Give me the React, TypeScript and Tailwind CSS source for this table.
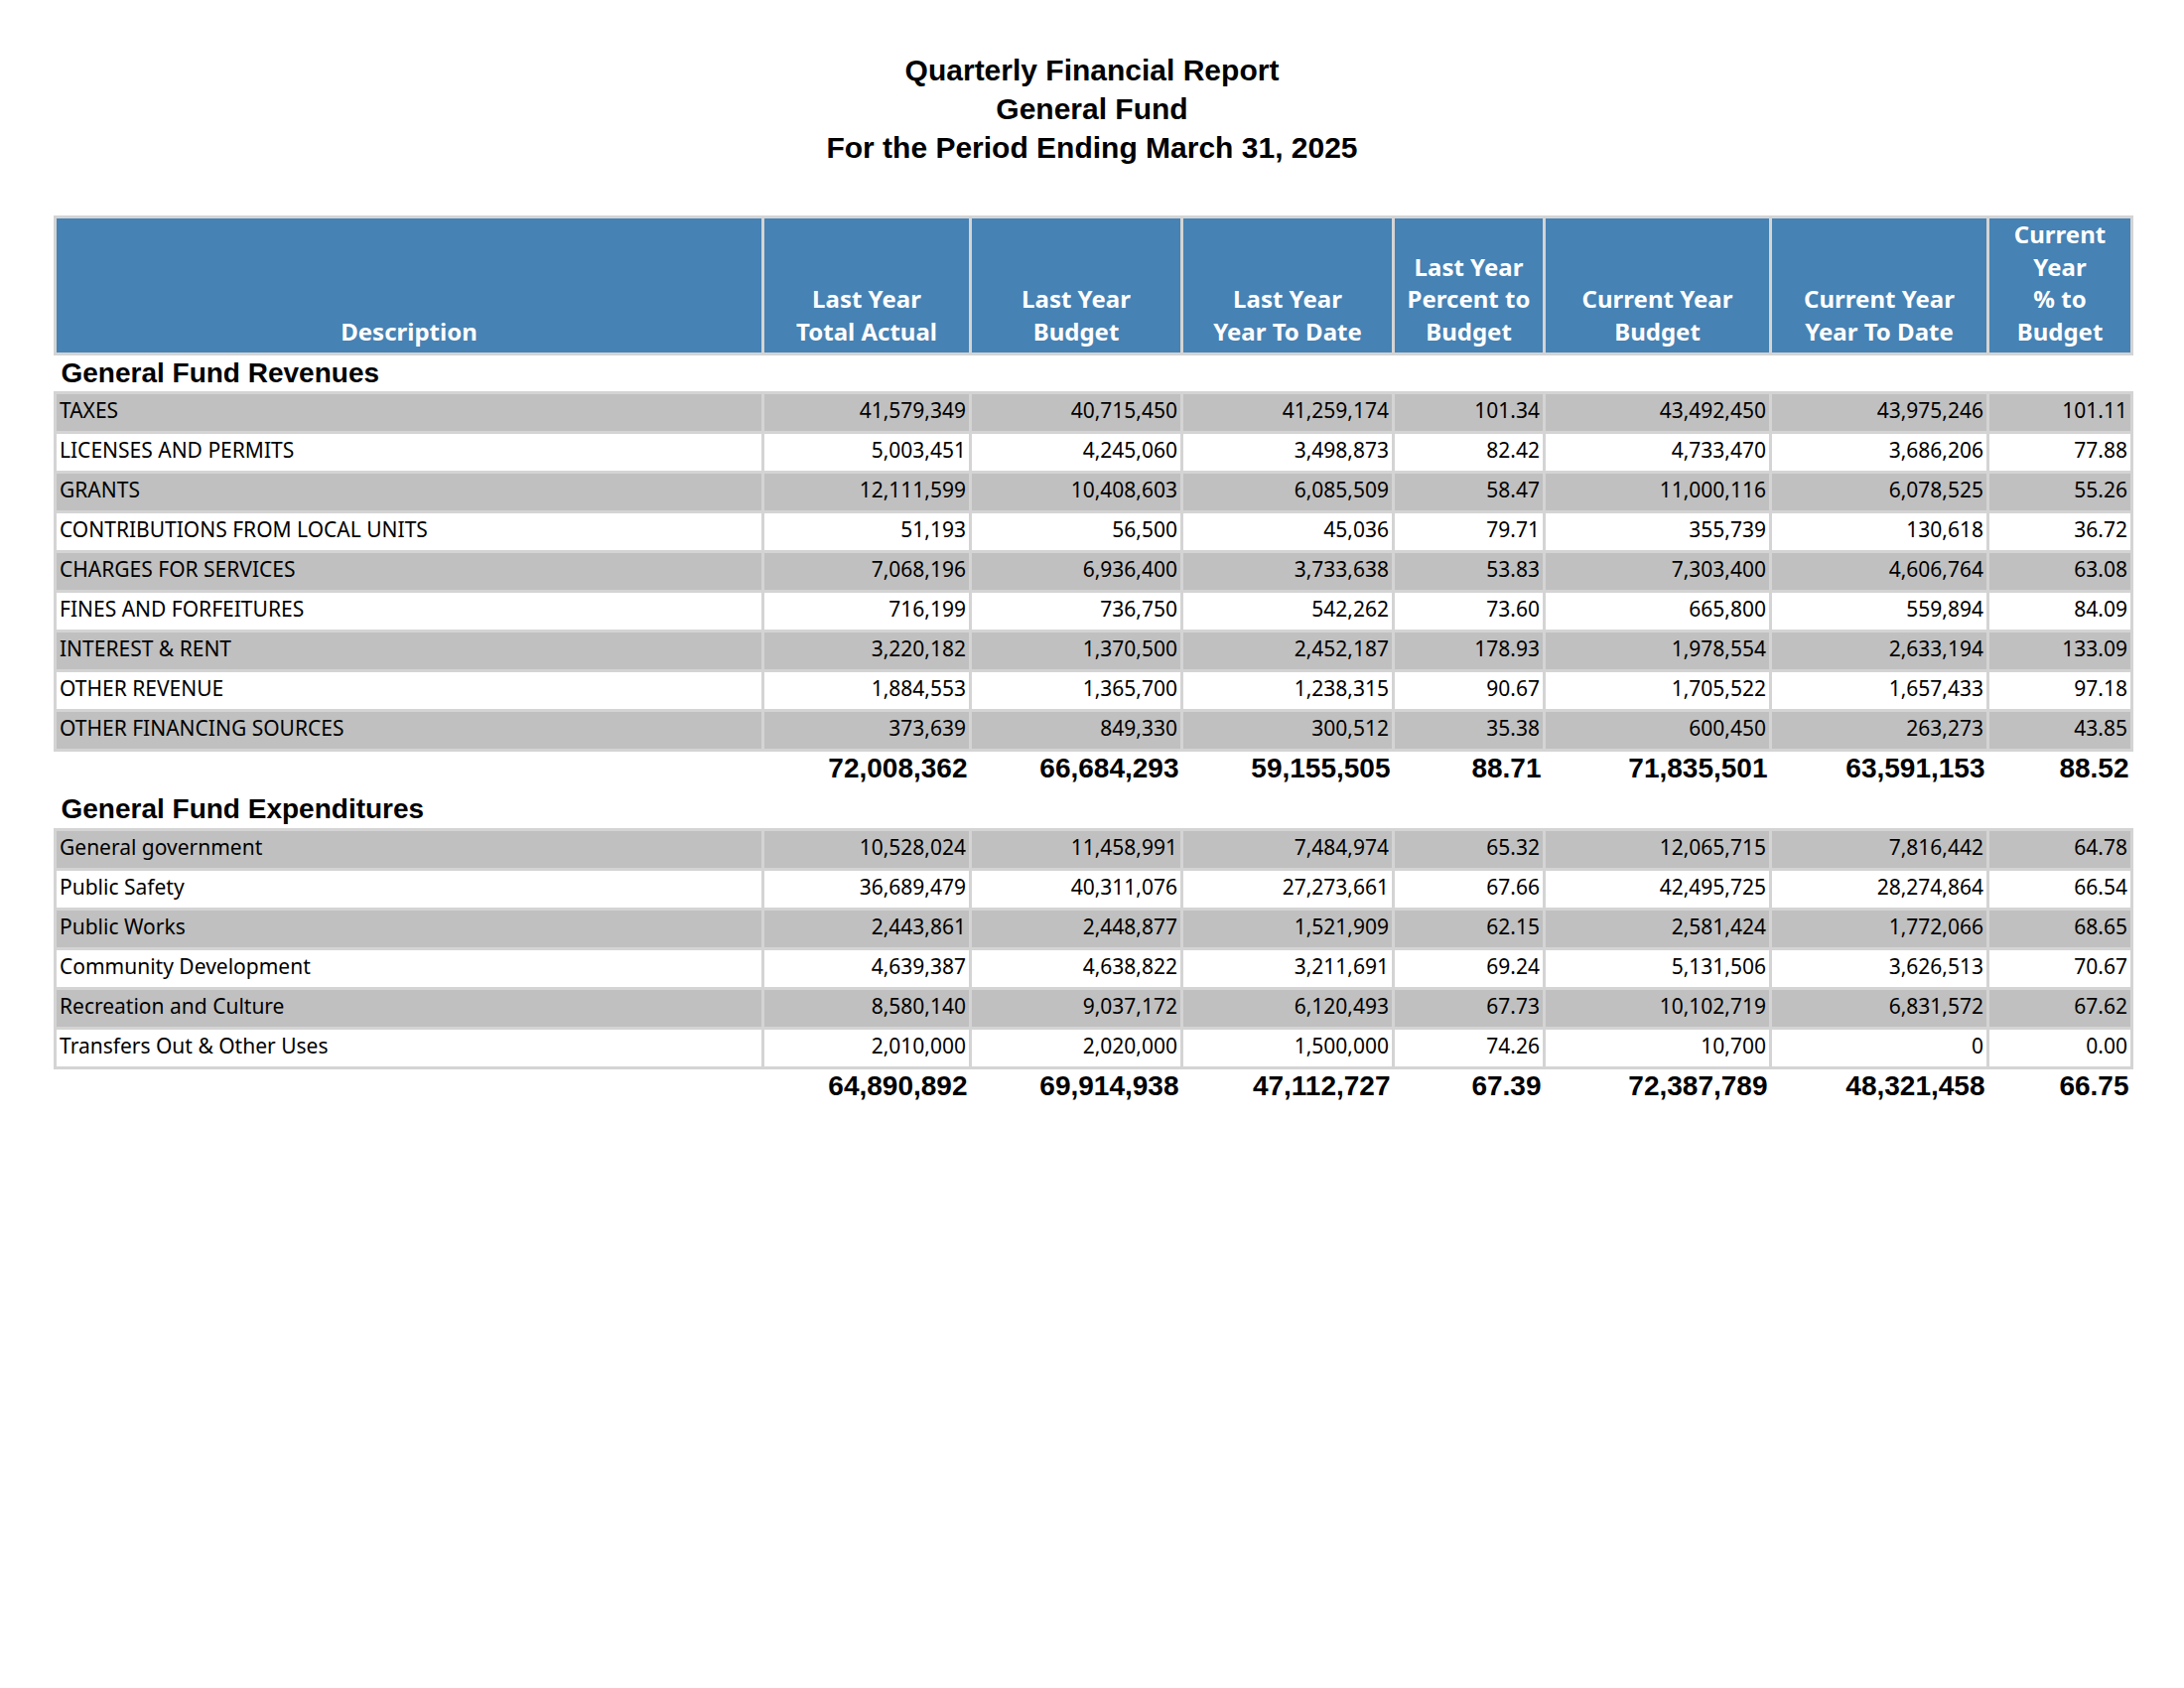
const body = "font-['Noto_Sans','DejaVu_Sans',sans-serif]";
const arial = "font-['Liberation_Sans',Arial,sans-serif]";

type Row = [string, string, string, string, string, string, string, string];

const revenues: Row[] = [
  ['TAXES', '41,579,349', '40,715,450', '41,259,174', '101.34', '43,492,450', '43,975,246', '101.11'],
  ['LICENSES AND PERMITS', '5,003,451', '4,245,060', '3,498,873', '82.42', '4,733,470', '3,686,206', '77.88'],
  ['GRANTS', '12,111,599', '10,408,603', '6,085,509', '58.47', '11,000,116', '6,078,525', '55.26'],
  ['CONTRIBUTIONS FROM LOCAL UNITS', '51,193', '56,500', '45,036', '79.71', '355,739', '130,618', '36.72'],
  ['CHARGES FOR SERVICES', '7,068,196', '6,936,400', '3,733,638', '53.83', '7,303,400', '4,606,764', '63.08'],
  ['FINES AND FORFEITURES', '716,199', '736,750', '542,262', '73.60', '665,800', '559,894', '84.09'],
  ['INTEREST & RENT', '3,220,182', '1,370,500', '2,452,187', '178.93', '1,978,554', '2,633,194', '133.09'],
  ['OTHER REVENUE', '1,884,553', '1,365,700', '1,238,315', '90.67', '1,705,522', '1,657,433', '97.18'],
  ['OTHER FINANCING SOURCES', '373,639', '849,330', '300,512', '35.38', '600,450', '263,273', '43.85'],
];
const revenueTotals = ['72,008,362', '66,684,293', '59,155,505', '88.71', '71,835,501', '63,591,153', '88.52'];

const expenditures: Row[] = [
  ['General government', '10,528,024', '11,458,991', '7,484,974', '65.32', '12,065,715', '7,816,442', '64.78'],
  ['Public Safety', '36,689,479', '40,311,076', '27,273,661', '67.66', '42,495,725', '28,274,864', '66.54'],
  ['Public Works', '2,443,861', '2,448,877', '1,521,909', '62.15', '2,581,424', '1,772,066', '68.65'],
  ['Community Development', '4,639,387', '4,638,822', '3,211,691', '69.24', '5,131,506', '3,626,513', '70.67'],
  ['Recreation and Culture', '8,580,140', '9,037,172', '6,120,493', '67.73', '10,102,719', '6,831,572', '67.62'],
  ['Transfers Out & Other Uses', '2,010,000', '2,020,000', '1,500,000', '74.26', '10,700', '0', '0.00'],
];
const expenditureTotals = ['64,890,892', '69,914,938', '47,112,727', '67.39', '72,387,789', '48,321,458', '66.75'];

const headers: string[][] = [
  ['Description'],
  ['Last Year', 'Total Actual'],
  ['Last Year', 'Budget'],
  ['Last Year', 'Year To Date'],
  ['Last Year', 'Percent to', 'Budget'],
  ['Current Year', 'Budget'],
  ['Current Year', 'Year To Date'],
  ['Current', 'Year', '% to', 'Budget'],
];

function SectionTitle({ title }: { title: string }) {
  return (
    <tr className="h-[39px]">
      <td colSpan={8} className={`${arial} px-[6px] text-[28px] font-bold leading-none text-black`}>
        {title}
      </td>
    </tr>
  );
}

function DataRow({ row, shaded }: { row: Row; shaded: boolean }) {
  return (
    <tr className={`h-[40px] ${shaded ? 'bg-[#c0c0c0]' : 'bg-white'}`}>
      {row.map((cell, i) => (
        <td
          key={i}
          className={`border-[3px] border-[#d4d4d4] px-[3px] pb-[5px] text-[21px] leading-none text-black ${
            i === 0 ? 'text-left' : 'text-right'
          }`}
        >
          {cell}
        </td>
      ))}
    </tr>
  );
}

function TotalRow({ values }: { values: string[] }) {
  return (
    <tr className="h-[41px]">
      <td />
      {values.map((v, i) => (
        <td key={i} className={`${arial} px-[3px] pb-[5px] text-right text-[28px] font-bold leading-none text-black`}>
          {v}
        </td>
      ))}
    </tr>
  );
}

export default function App() {
  return (
    <div className={`min-h-[1700px] w-[2200px] bg-white ${body}`}>
      {/* Report title */}
      <div className={`${arial} pt-[51px] text-center text-[30px] font-bold leading-[39px] text-black`}>
        <div>Quarterly Financial Report</div>
        <div>General Fund</div>
        <div>For the Period Ending March 31, 2025</div>
      </div>

      <table className="ml-[54px] mt-[49px] w-[2092px] table-fixed border-collapse">
        <colgroup>
          <col className="w-[713px]" />
          <col className="w-[209px]" />
          <col className="w-[213px]" />
          <col className="w-[213px]" />
          <col className="w-[152px]" />
          <col className="w-[228px]" />
          <col className="w-[219px]" />
          <col className="w-[145px]" />
        </colgroup>
        <thead>
          <tr className="h-[136px]">
            {headers.map((lines, i) => (
              <th
                key={i}
                className="border-[3px] border-[#d4d4d4] bg-[#4682b4] px-1 pb-[5px] text-center align-bottom text-[24px] font-bold leading-[32.5px] text-white"
              >
                {lines.map((l) => (
                  <div key={l}>{l}</div>
                ))}
              </th>
            ))}
          </tr>
        </thead>
        <tbody>
          <SectionTitle title="General Fund Revenues" />
          {revenues.map((r, i) => (
            <DataRow key={r[0]} row={r} shaded={i % 2 === 0} />
          ))}
          <TotalRow values={revenueTotals} />
          <SectionTitle title="General Fund Expenditures" />
          {expenditures.map((r, i) => (
            <DataRow key={r[0]} row={r} shaded={i % 2 === 0} />
          ))}
          <TotalRow values={expenditureTotals} />
        </tbody>
      </table>
    </div>
  );
}
